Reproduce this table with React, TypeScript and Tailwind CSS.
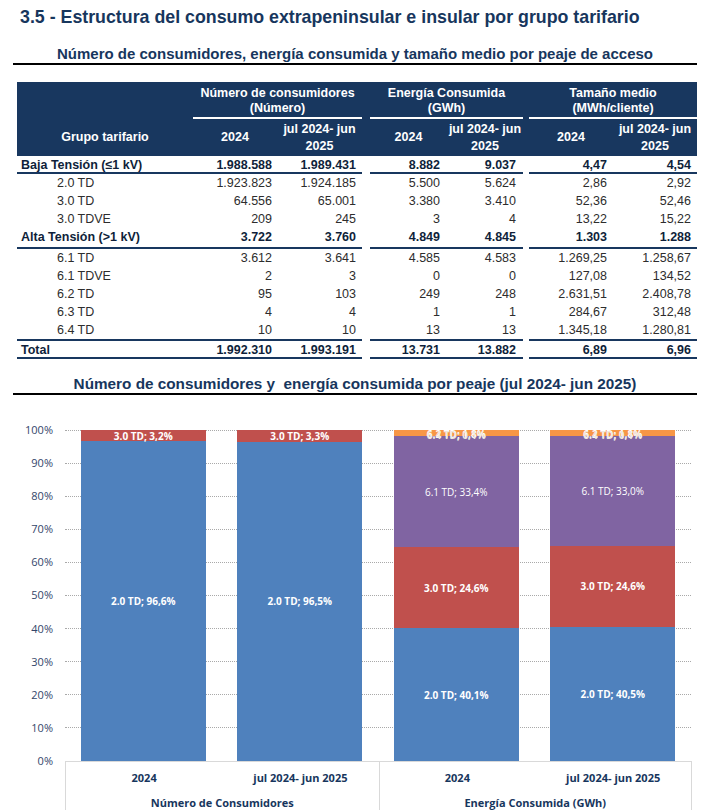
import React from "react";

type Row = { name: string; bold?: boolean; v: string[]; h: string };

const COLS = "grid grid-cols-[176px_84px_85px_8px_77px_76px_6px_84px_84px]";

const top: Row[] = [
  { name: "Baja Tensión (≤1 kV)", bold: true, h: "h-[16px]", v: ["1.988.588", "1.989.431", "8.882", "9.037", "4,47", "4,54"] },
];
const baja: Row[] = [
  { name: "2.0 TD", h: "h-[18px]", v: ["1.923.823", "1.924.185", "5.500", "5.624", "2,86", "2,92"] },
  { name: "3.0 TD", h: "h-[18px]", v: ["64.556", "65.001", "3.380", "3.410", "52,36", "52,46"] },
  { name: "3.0 TDVE", h: "h-[18px]", v: ["209", "245", "3", "4", "13,22", "15,22"] },
  { name: "Alta Tensión (>1 kV)", bold: true, h: "h-[19px]", v: ["3.722", "3.760", "4.849", "4.845", "1.303", "1.288"] },
];
const alta: Row[] = [
  { name: "6.1 TD", h: "h-[18px]", v: ["3.612", "3.641", "4.585", "4.583", "1.269,25", "1.258,67"] },
  { name: "6.1 TDVE", h: "h-[18px]", v: ["2", "3", "0", "0", "127,08", "134,52"] },
  { name: "6.2 TD", h: "h-[18px]", v: ["95", "103", "249", "248", "2.631,51", "2.408,78"] },
  { name: "6.3 TD", h: "h-[18px]", v: ["4", "4", "1", "1", "284,67", "312,48"] },
  { name: "6.4 TD", h: "h-[18px]", v: ["10", "10", "13", "13", "1.345,18", "1.280,81"] },
];
const total: Row[] = [
  { name: "Total", bold: true, h: "h-[16px]", v: ["1.992.310", "1.993.191", "13.731", "13.882", "6,89", "6,96"] },
];

function DataRow({ r }: { r: Row }) {
  const txt = r.bold ? "font-bold text-[#0f1f3a]" : "text-[#2d2d2d]";
  return (
    <div className={`${COLS} ${r.h} items-center ${txt}`}>
      <div className={r.bold ? "pl-[4px]" : "pl-[40px]"}>{r.name}</div>
      <div className="text-right pr-[5px]">{r.v[0]}</div>
      <div className="text-right pr-[6px]">{r.v[1]}</div>
      <div />
      <div className="text-right pr-[7px]">{r.v[2]}</div>
      <div className="text-right pr-[7px]">{r.v[3]}</div>
      <div />
      <div className="text-right pr-[6px]">{r.v[4]}</div>
      <div className="text-right pr-[6px]">{r.v[5]}</div>
    </div>
  );
}

function Rule() {
  return (
    <div className={`${COLS} h-[2px]`}>
      <div className="col-span-3 bg-[#18375f]" />
      <div />
      <div className="col-span-2 bg-[#18375f]" />
      <div />
      <div className="col-span-2 bg-[#18375f]" />
    </div>
  );
}

type Seg = { pct: number; color: string; label?: string; bold?: boolean; extra?: string };

const bars: Seg[][] = [
  [
    { pct: 96.6, color: "bg-[#4f81bd]", label: "2.0 TD; 96,6%", bold: true },
    { pct: 3.4, color: "bg-[#c0504d]", label: "3.0 TD; 3,2%", bold: true },
  ],
  [
    { pct: 96.5, color: "bg-[#4f81bd]", label: "2.0 TD; 96,5%", bold: true },
    { pct: 3.5, color: "bg-[#c0504d]", label: "3.0 TD; 3,3%", bold: true },
  ],
  [
    { pct: 40.1, color: "bg-[#4f81bd]", label: "2.0 TD; 40,1%", bold: true },
    { pct: 24.6, color: "bg-[#c0504d]", label: "3.0 TD; 24,6%", bold: true },
    { pct: 33.4, color: "bg-[#8064a2]", label: "6.1 TD; 33,4%" },
    { pct: 1.9, color: "bg-[#f79646]", label: "6.2 TD; 1,8%", bold: true, extra: "6.4 TD; 0,1%" },
  ],
  [
    { pct: 40.5, color: "bg-[#4f81bd]", label: "2.0 TD; 40,5%", bold: true },
    { pct: 24.6, color: "bg-[#c0504d]", label: "3.0 TD; 24,6%", bold: true },
    { pct: 33.0, color: "bg-[#8064a2]", label: "6.1 TD; 33,0%" },
    { pct: 1.9, color: "bg-[#f79646]", label: "6.2 TD; 1,8%", bold: true, extra: "6.4 TD; 0,1%" },
  ],
];

const ticks = ["100%", "90%", "80%", "70%", "60%", "50%", "40%", "30%", "20%", "10%", "0%"];

export default function App() {
  return (
    <div className="w-[706px] h-[810px] overflow-hidden bg-white font-['Liberation_Sans',Arial,sans-serif]">
      <h1 className="pl-[20px] pt-[7px] text-[17.8px] leading-[20px] font-bold text-[#17365d]">
        3.5 - Estructura del consumo extrapeninsular e insular por grupo tarifario
      </h1>

      <div className="ml-[13px] w-[684px] mt-[18px]">
        <div className="text-center text-[15px] leading-[18px] font-bold text-[#17365d]">
          Número de consumidores, energía consumida y tamaño medio por peaje de acceso
        </div>
        <div className="h-[2px] bg-black" />
      </div>

      {/* table */}
      <div className="ml-[17px] w-[680px] mt-[17px] text-[12.5px]">
        <div className="bg-[#18375f] text-white font-bold">
          <div className={`${COLS} h-[35px] leading-[15px] pt-[4px] text-center`}>
            <div />
            <div className="col-span-2">Número de consumidores<br />(Número)</div>
            <div />
            <div className="col-span-2">Energía Consumida<br />(GWh)</div>
            <div />
            <div className="col-span-2">Tamaño medio<br />(MWh/cliente)</div>
          </div>
          <div className={`${COLS} h-[2px]`}>
            <div />
            <div className="col-span-2 bg-white" />
            <div />
            <div className="col-span-2 bg-white" />
            <div />
            <div className="col-span-2 bg-white" />
          </div>
          <div className={`${COLS} h-[37px] items-center text-center leading-[17px]`}>
            <div>Grupo tarifario</div>
            <div>2024</div>
            <div>jul 2024- jun<br />2025</div>
            <div />
            <div>2024</div>
            <div>jul 2024- jun<br />2025</div>
            <div />
            <div>2024</div>
            <div>jul 2024- jun<br />2025</div>
          </div>
        </div>
        {top.map((r) => <DataRow key={r.name} r={r} />)}
        <Rule />
        {baja.map((r) => <DataRow key={r.name} r={r} />)}
        <Rule />
        {alta.map((r) => <DataRow key={r.name} r={r} />)}
        <Rule />
        {total.map((r) => <DataRow key={r.name} r={r} />)}
        <Rule />
      </div>

      {/* chart title */}
      <div className="ml-[13px] w-[684px] mt-[16px]">
        <div className="text-center text-[15.3px] leading-[18px] font-bold text-[#17365d]">
          Número de consumidores y&nbsp; energía consumida por peaje (jul 2024- jun 2025)
        </div>
        <div className="h-[2px] bg-black" />
      </div>

      {/* chart */}
      <div className="mt-[35px] font-['Open_Sans',sans-serif]">
        <div className="relative w-[691px] h-[331px]">
          <div className="absolute inset-0 flex flex-col justify-between">
            {ticks.map((t) => (
              <div key={t} className="h-0 flex items-center">
                <div className="w-[65px] pr-[12px] text-right text-[11px] leading-[14px] text-[#33466a]">{t}</div>
                {t !== "0%" && <div className="flex-1 border-t border-dotted border-[#a9a9a9]" />}
              </div>
            ))}
          </div>
          <div className="absolute top-0 bottom-0 left-[65px] w-[626px] grid grid-cols-4">
            {bars.map((segs, i) => (
              <div key={i} className="flex justify-center">
                <div className="w-[125px] h-full flex flex-col-reverse">
                  {segs.map((s, j) => (
                    <div
                      key={j}
                      className={`${s.color} relative flex items-center justify-center text-white text-[10px] leading-[12px] ${s.bold ? "font-bold" : ""}`}
                      style={{ height: `${s.pct}%` }}
                    >
                      {s.extra ? (
                        <>
                          <span className="absolute top-[-2px] left-0 right-0 text-center">{s.label}</span>
                          <span className="absolute top-[-1px] left-0 right-0 text-center text-[#f0e8e0]">{s.extra}</span>
                        </>
                      ) : (
                        <span className="whitespace-nowrap">{s.label}</span>
                      )}
                    </div>
                  ))}
                </div>
              </div>
            ))}
          </div>
        </div>

        <div className="ml-[65px] w-[627px] h-[49px] grid grid-cols-2 border-t border-[#d9d9d9] text-[11px] font-bold text-[#17365d]">
          <div className="border-l border-[#d9d9d9]">
            <div className="grid grid-cols-2 text-center pt-[8px] leading-[16px]">
              <div>2024</div>
              <div>jul 2024- jun 2025</div>
            </div>
            <div className="text-center leading-[16px] mt-[9px]">Número de Consumidores</div>
          </div>
          <div className="border-l border-r border-[#d9d9d9]">
            <div className="grid grid-cols-2 text-center pt-[8px] leading-[16px]">
              <div>2024</div>
              <div>jul 2024- jun 2025</div>
            </div>
            <div className="text-center leading-[16px] mt-[9px]">Energía Consumida (GWh)</div>
          </div>
        </div>
      </div>
    </div>
  );
}
